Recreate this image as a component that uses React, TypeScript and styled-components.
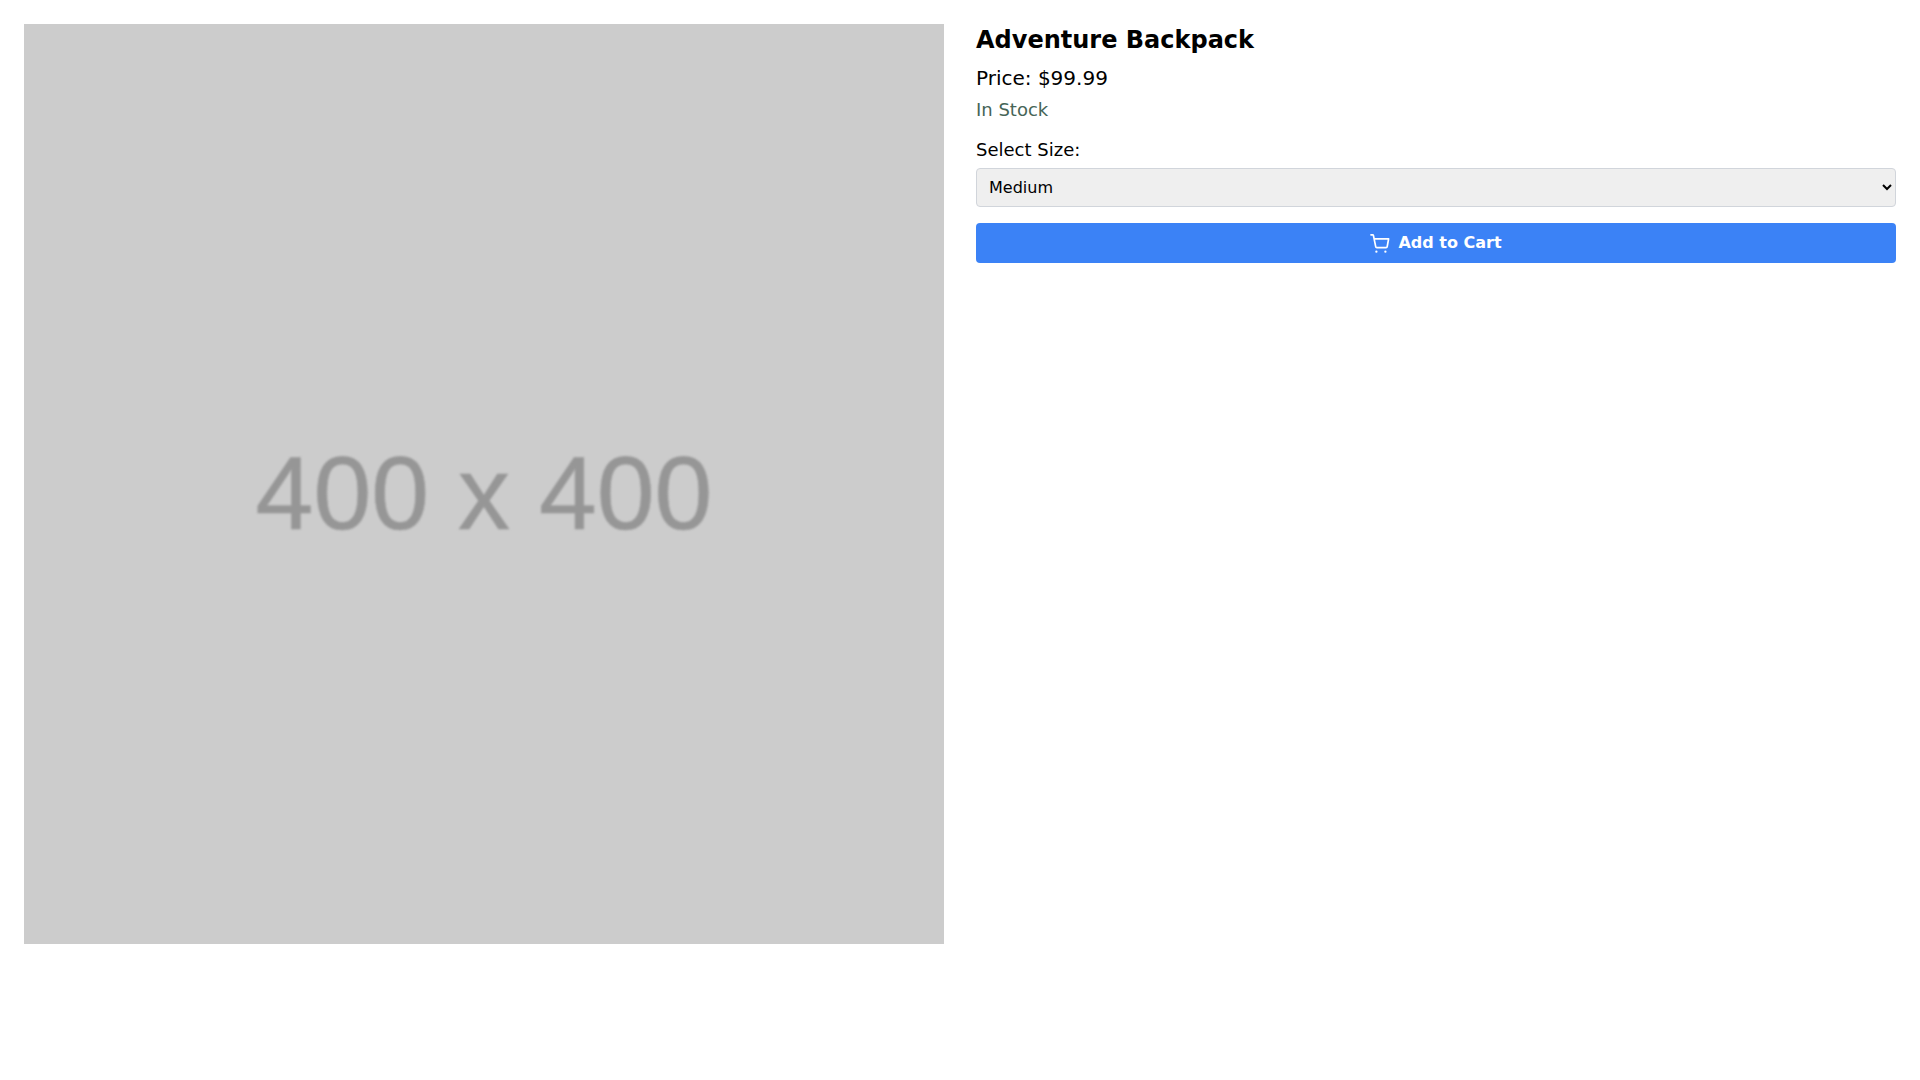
import React from "react";
import styled, { createGlobalStyle } from "styled-components";

const GlobalStyle = createGlobalStyle`
    html, body {
        margin: 0;
        padding: 0;
        background: #fff;
    }

    * {
        box-sizing: border-box;
    }
`;

const CartIcon = () => (
    <svg width="20" height="20" viewBox="0 0 20 20" fill="none" stroke="currentColor" strokeWidth="1.7" strokeLinecap="round" strokeLinejoin="round">
        <path d="M1 1.8H2.6a0.8 0.8 0 0 1 0.8 0.6L5.7 13.6a1.2 1.2 0 0 0 1.2 1H16a1.2 1.2 0 0 0 1.2-1L18.6 5.8H4.3" />
        <circle cx="6.4" cy="18.7" r="1.15" fill="currentColor" stroke="none" />
        <circle cx="15.4" cy="18.7" r="1.15" fill="currentColor" stroke="none" />
    </svg>
);

const App = () => {
    return (
        <>
            <GlobalStyle />
            <ProductPage>
                <Placeholder>
                    <PlaceholderText>400 x 400</PlaceholderText>
                </Placeholder>
                <Details>
                    <Title>Adventure Backpack</Title>
                    <Price>Price: $99.99</Price>
                    <Stock>In Stock</Stock>
                    <SizeLabel htmlFor="size">Select Size:</SizeLabel>
                    <SizeSelect id="size" defaultValue="Medium">
                        <option>Small</option>
                        <option>Medium</option>
                        <option>Large</option>
                    </SizeSelect>
                    <AddButton>
                        <CartIcon />
                        Add to Cart
                    </AddButton>
                </Details>
            </ProductPage>
        </>
    );
};

const ProductPage = styled.div`
    display: grid;
    grid-template-columns: 1fr 1fr;
    gap: 32px;
    padding: 24px;
    font-family: "DejaVu Sans", sans-serif;
    color: #000;
`;

const Placeholder = styled.div`
    aspect-ratio: 1 / 1;
    background: #ccc;
    display: flex;
    align-items: center;
    justify-content: center;
    overflow: hidden;
`;

const PlaceholderText = styled.span`
    font-family: "Liberation Sans", Arial, sans-serif;
    font-size: 104px;
    line-height: 1;
    color: #969696;
    -webkit-text-stroke: 0.6px #969696;
    filter: blur(1px);
    margin-top: 18px;
`;

const Details = styled.div`
    display: flex;
    flex-direction: column;
    align-items: stretch;
`;

const Title = styled.h1`
    margin: 0 0 8px;
    font-size: 24px;
    line-height: 32px;
    font-weight: 700;
`;

const Price = styled.p`
    margin: 0 0 4px;
    font-size: 20px;
    line-height: 28px;
`;

const Stock = styled.p`
    margin: 0 0 12px;
    font-size: 18px;
    line-height: 28px;
    color: #466557;
`;

const SizeLabel = styled.label`
    display: block;
    margin-bottom: 4px;
    font-size: 18px;
    line-height: 28px;
`;

const SizeSelect = styled.select`
    width: 100%;
    padding: 8px;
    margin-bottom: 16px;
    background: #efefef;
    border: 1px solid #d1d5db;
    border-radius: 4px;
    font-family: inherit;
    font-size: 16px;
    color: #000;
`;

const AddButton = styled.button`
    display: flex;
    align-items: center;
    justify-content: center;
    gap: 8px;
    width: 100%;
    padding: 8px 16px;
    background: #3b82f6;
    border: none;
    border-radius: 4px;
    color: #fff;
    font-family: inherit;
    font-size: 16px;
    line-height: 24px;
    font-weight: 700;
`;

export default App;
